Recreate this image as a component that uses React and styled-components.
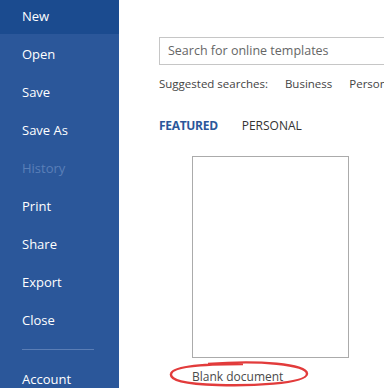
import styled, { createGlobalStyle } from 'styled-components';

const GlobalStyle = createGlobalStyle`
  html, body {
    margin: 0;
    padding: 0;
    background: #fff;
    overflow: hidden;
  }
  body {
    font-family: "Open Sans", "Noto Sans", sans-serif;
  }
`;

const menuItems = ['New', 'Open', 'Save', 'Save As', 'History', 'Print', 'Share', 'Export', 'Close'];

const App = () => {
  return (
    <>
      <GlobalStyle />
      <Page>
        <Sidebar>
          {menuItems.map((item, i) => (
            <MenuItem key={item} $active={i === 0} $disabled={item === 'History'}>
              {item}
            </MenuItem>
          ))}
          <Divider />
          <MenuItem>Account</MenuItem>
        </Sidebar>
        <Main>
          <SearchBox>Search for online templates</SearchBox>
          <Suggested>
            <SuggestLabel>Suggested searches:</SuggestLabel>
            <SuggestLink>Business</SuggestLink>
            <SuggestLink>Person</SuggestLink>
          </Suggested>
          <Tabs>
            <Tab $active>FEATURED</Tab>
            <Tab>PERSONAL</Tab>
          </Tabs>
          <Template>
            <Thumb />
            <Caption>
              Blank document
              <Circle viewBox="0 0 142 26" preserveAspectRatio="none">
                <path
                  d="M40 3 C 90 -1, 140 3, 139 13 C 138 23, 80 25, 50 24 C 15 23, 2 19, 3 13 C 4 6, 30 3, 75 3"
                  fill="none"
                  stroke="#e23b3b"
                  strokeWidth="2.4"
                />
              </Circle>
            </Caption>
          </Template>
        </Main>
      </Page>
    </>
  );
};

const Page = styled.div`
  display: flex;
  width: 384px;
  height: 388px;
  overflow: hidden;
`;

const Sidebar = styled.div`
  width: 119px;
  flex-shrink: 0;
  background: #2b579a;
  display: flex;
  flex-direction: column;
`;

const MenuItem = styled.div`
  height: ${(p) => (p.$active ? '34px' : '38px')};
  line-height: ${(p) => (p.$active ? '32px' : '40px')};
  padding-left: 22px;
  font-size: 13px;
  color: ${(p) => (p.$disabled ? '#5a7fb8' : '#fff')};
  background: ${(p) => (p.$active ? '#1b4b8f' : 'transparent')};
  flex-shrink: 0;
`;

const Divider = styled.div`
  margin: 11px 0 9px 22px;
  width: 72px;
  height: 1px;
  flex-shrink: 0;
  background: #5a7db5;
`;

const Main = styled.div`
  flex: 1;
  padding: 37px 0 0 40px;
  display: flex;
  flex-direction: column;
  min-width: 0;
`;

const SearchBox = styled.div`
  height: 26px;
  width: 260px;
  border: 1px solid #c6c6c6;
  padding-left: 8px;
  line-height: 26px;
  font-size: 12.5px;
  color: #666;
  white-space: nowrap;
  flex-shrink: 0;
`;

const Suggested = styled.div`
  display: flex;
  gap: 17px;
  margin-top: 11px;
  font-size: 11.5px;
  color: #444;
  white-space: nowrap;
`;

const SuggestLabel = styled.span``;

const SuggestLink = styled.span`
  color: #444;
`;

const Tabs = styled.div`
  display: flex;
  gap: 24px;
  margin-top: 26px;
  font-size: 12px;
  white-space: nowrap;
`;

const Tab = styled.span`
  color: ${(p) => (p.$active ? '#2b579a' : '#333')};
  font-weight: ${(p) => (p.$active ? 700 : 400)};
  letter-spacing: ${(p) => (p.$active ? '-0.3px' : '0')};
`;

const Template = styled.div`
  display: flex;
  flex-direction: column;
  margin-top: 22px;
  margin-left: 33px;
`;

const Thumb = styled.div`
  width: 155px;
  height: 200px;
  border: 1px solid #ababab;
  background: #fff;
`;

const Caption = styled.div`
  position: relative;
  margin-top: 10px;
  font-size: 12px;
  color: #4a4a4a;
  white-space: nowrap;
`;

const Circle = styled.svg`
  position: absolute;
  left: -24px;
  top: -7px;
  width: 142px;
  height: 26px;
`;

export default App;
